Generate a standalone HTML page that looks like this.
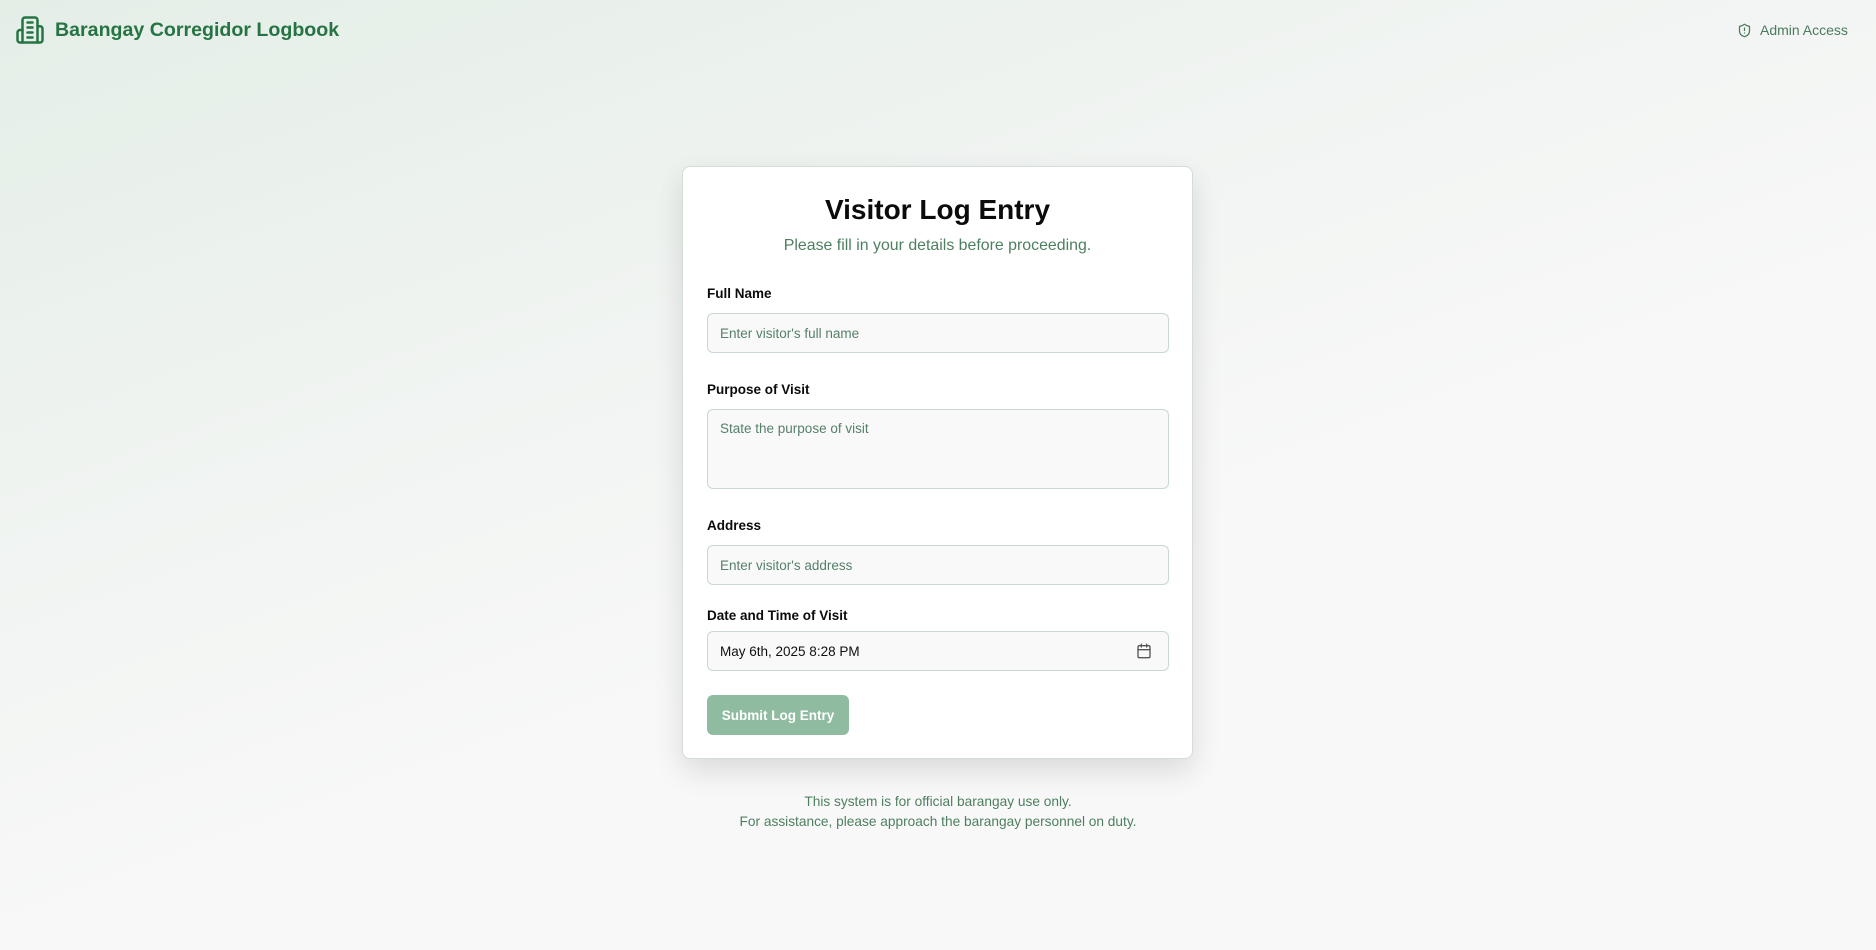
<!DOCTYPE html>
<html><head><meta charset="utf-8"><style>
*{box-sizing:border-box;margin:0;padding:0}
body{width:1876px;height:950px;overflow:hidden;font-family:"Liberation Sans",sans-serif;background:linear-gradient(160deg,#e4eee7 0%,#f1f4f2 35%,#f8f8f8 60%,#f8f8f8 100%);position:relative;color:#0b0b0b}
.logo{position:absolute;left:15px;top:15px;display:flex;align-items:center}
.logo span{margin-left:10px;font-size:19.6px;font-weight:bold;color:#267443}
.admin{position:absolute;left:1737px;top:22px;display:flex;align-items:center;font-size:14px;color:#4b7a5c}
.admin span{margin-left:8px}
.card{position:absolute;left:682px;top:166px;width:511px;height:593px;background:#fff;border:1px solid #d3dcd7;border-radius:8px;box-shadow:0 12px 30px rgba(0,0,0,.12)}
h1{position:absolute;top:27px;width:100%;text-align:center;font-size:28px;font-weight:bold}
.sub{position:absolute;top:70px;width:100%;text-align:center;font-size:15.9px;color:#4e7f60}
.lbl{position:absolute;left:24px;font-size:13.5px;font-weight:bold}
.in{position:absolute;left:24px;width:462px;height:40px;background:#f8f9f8;border:1px solid #c8d8d2;border-radius:6px;font-size:13.5px;color:#56806a;padding:0 12px;display:flex;align-items:center}
.ta{align-items:flex-start;padding-top:11px;height:80px}
.btn{position:absolute;left:24px;top:528px;width:142px;height:40px;background:#8fbca1;border-radius:6px;color:#fff;font-weight:bold;font-size:13.5px;display:flex;align-items:center;justify-content:center}
.foot{position:absolute;top:792px;width:100%;text-align:center;font-size:13.7px;color:#4e7f60;line-height:20px}
</style></head><body>
<div class="logo"><svg width="30" height="30" viewBox="0 0 24 24" fill="none" stroke="#267443" stroke-width="2" stroke-linecap="round" stroke-linejoin="round"><path d="M6 22V4a2 2 0 0 1 2-2h8a2 2 0 0 1 2 2v18Z"/><path d="M6 12H4a2 2 0 0 0-2 2v6a2 2 0 0 0 2 2h2"/><path d="M18 9h2a2 2 0 0 1 2 2v9a2 2 0 0 1-2 2h-2"/><path d="M10 6h4M10 10h4M10 14h4M10 18h4"/></svg><span>Barangay Corregidor Logbook</span></div>
<div class="admin"><svg width="15" height="15" viewBox="0 0 24 24" fill="none" stroke="#4b7a5c" stroke-width="2" stroke-linecap="round" stroke-linejoin="round"><path d="M20 13c0 5-3.5 7.5-7.66 8.95a1 1 0 0 1-.67-.01C7.5 20.5 4 18 4 13V6a1 1 0 0 1 1-1c2 0 4.5-1.2 6.24-2.72a1.17 1.17 0 0 1 1.52 0C14.510 3.81 17 5 19 5a1 1 0 0 1 1 1z"/><path d="M12 8v4M12 16h.01"/></svg><span>Admin Access</span></div>
<div class="card">
<h1>Visitor Log Entry</h1>
<div class="sub">Please fill in your details before proceeding.</div>
<div class="lbl" style="top:119px">Full Name</div>
<div class="in" style="top:146px">Enter visitor's full name</div>
<div class="lbl" style="top:215px">Purpose of Visit</div>
<div class="in ta" style="top:242px">State the purpose of visit</div>
<div class="lbl" style="top:351px">Address</div>
<div class="in" style="top:378px">Enter visitor's address</div>
<div class="lbl" style="top:441px">Date and Time of Visit</div>
<div class="in" style="top:464px;color:#111;justify-content:space-between">May 6th, 2025 8:28 PM<svg width="16" height="16" viewBox="0 0 24 24" fill="none" stroke="#555" stroke-width="2" stroke-linecap="round" style="margin-right:4px"><rect x="3" y="4" width="18" height="18" rx="2"/><path d="M16 2v4M8 2v4M3 10h18"/></svg></div>
<div class="btn">Submit Log Entry</div>
</div>
<div class="foot">This system is for official barangay use only.<br>For assistance, please approach the barangay personnel on duty.</div>
</body></html>
